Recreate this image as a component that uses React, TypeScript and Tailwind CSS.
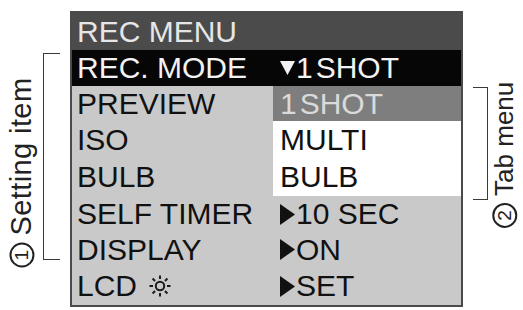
import type { ReactNode } from "react";

type Row = {
  label: ReactNode;
  value?: ReactNode;
  h: string;
  rowBg: string;
  labelColor: string;
  valueBg?: string;
  valueColor?: string;
};

function TriDown() {
  return (
    <svg width="15" height="16" viewBox="0 0 15 16" className="mr-[1px] shrink-0">
      <path d="M0 1 L15 1 L7.5 15 Z" fill="currentColor" />
    </svg>
  );
}

function TriRight() {
  return (
    <svg width="15" height="21" viewBox="0 0 15 21" className="mr-[1px] shrink-0">
      <path d="M0 0 L15 10.5 L0 21 Z" fill="currentColor" />
    </svg>
  );
}

function Sun() {
  const rays = [0, 45, 90, 135, 180, 225, 270, 315];
  return (
    <svg width="22" height="22" viewBox="0 0 22 22" className="ml-[12px]">
      <circle cx="11" cy="11" r="4.2" fill="none" stroke="#1a1a1a" strokeWidth="2" />
      {rays.map((a) => {
        const r = (a * Math.PI) / 180;
        return (
          <line
            key={a}
            x1={11 + Math.cos(r) * 7}
            y1={11 + Math.sin(r) * 7}
            x2={11 + Math.cos(r) * 10.5}
            y2={11 + Math.sin(r) * 10.5}
            stroke="#1a1a1a"
            strokeWidth="2"
          />
        );
      })}
    </svg>
  );
}

function Circled({ n }: { n: string }) {
  return (
    <span className="inline-flex w-[25px] h-[25px] rounded-full border-2 border-[#222] items-center justify-center text-[19px] leading-none align-middle mr-[7px] translate-y-[-2px]">
      {n}
    </span>
  );
}

const rows: Row[] = [
  {
    label: "REC. MODE",
    value: (
      <>
        <TriDown />1<span className="ml-[3px]">SHOT</span>
      </>
    ),
    h: "h-[36px]",
    rowBg: "bg-[#060606]",
    labelColor: "text-[#f2f2f2]",
    valueColor: "text-[#f2f2f2]",
  },
  {
    label: "PREVIEW",
    value: (
      <>
        1<span className="ml-[3px]">SHOT</span>
      </>
    ),
    h: "h-[35px]",
    rowBg: "bg-[#c9c9c9]",
    labelColor: "text-[#111]",
    valueBg: "bg-[#7e7e7e]",
    valueColor: "text-[#dadada]",
  },
  {
    label: "ISO",
    value: "MULTI",
    h: "h-[37px]",
    rowBg: "bg-[#c9c9c9]",
    labelColor: "text-[#111]",
    valueBg: "bg-white",
    valueColor: "text-[#111]",
  },
  {
    label: "BULB",
    value: "BULB",
    h: "h-[38px]",
    rowBg: "bg-[#c9c9c9]",
    labelColor: "text-[#111]",
    valueBg: "bg-white",
    valueColor: "text-[#111]",
  },
  {
    label: "SELF TIMER",
    value: (
      <>
        <TriRight />10 SEC
      </>
    ),
    h: "h-[36px]",
    rowBg: "bg-[#c9c9c9]",
    labelColor: "text-[#111]",
    valueColor: "text-[#111]",
  },
  {
    label: "DISPLAY",
    value: (
      <>
        <TriRight />ON
      </>
    ),
    h: "h-[35px]",
    rowBg: "bg-[#c9c9c9]",
    labelColor: "text-[#111]",
    valueColor: "text-[#111]",
  },
  {
    label: (
      <>
        LCD
        <Sun />
      </>
    ),
    value: (
      <>
        <TriRight />SET
      </>
    ),
    h: "h-[38px]",
    rowBg: "bg-[#c9c9c9]",
    labelColor: "text-[#111]",
    valueColor: "text-[#111]",
  },
];

export default function App() {
  return (
    <div className="w-[523px] h-[310px] bg-white flex overflow-hidden font-['Liberation_Sans',Arial,sans-serif]">
      {/* left annotation */}
      <div className="w-[70px] flex shrink-0">
        <div className="w-[43px] min-w-0 shrink-0 h-[310px] flex items-center justify-center pt-[34px]">
          <span className="-rotate-90 text-[29px] tracking-[0.4px] leading-none text-[#222] whitespace-nowrap">
            <Circled n="1" />
            Setting item
          </span>
        </div>
        <div className="mt-[53px] h-[207px] w-[17px] border-y border-l border-[#3a3a3a]" />
      </div>

      {/* menu panel */}
      <div className="mt-[11px] w-[393px] h-[296px] shrink-0 border-2 border-[#4a4a4a] flex flex-col text-[30px] leading-none">
        <div className="h-[37px] bg-[#4b4b4b] text-[#e6e6e6] flex items-center pl-[5px]">REC MENU</div>
        {rows.map((r, i) => (
          <div key={i} className={`${r.h} ${r.rowBg} flex`}>
            <div className={`w-[201px] shrink-0 flex items-center pl-[5px] whitespace-nowrap ${r.labelColor}`}>
              {r.label}
            </div>
            <div className={`flex-1 flex items-center pl-[7px] whitespace-nowrap ${r.valueBg ?? ""} ${r.valueColor ?? ""}`}>
              {r.value}
            </div>
          </div>
        ))}
      </div>

      {/* right annotation */}
      <div className="w-[60px] shrink-0 flex">
        <div className="ml-[10px] mt-[87px] h-[113px] w-[15px] border-y border-r border-[#3a3a3a] shrink-0" />
        <div className="w-[35px] min-w-0 shrink-0 h-[310px] flex items-center justify-center">
          <span className="-rotate-90 text-[26px] leading-none text-[#222] whitespace-nowrap">
            <Circled n="2" />
            Tab menu
          </span>
        </div>
      </div>
    </div>
  );
}
